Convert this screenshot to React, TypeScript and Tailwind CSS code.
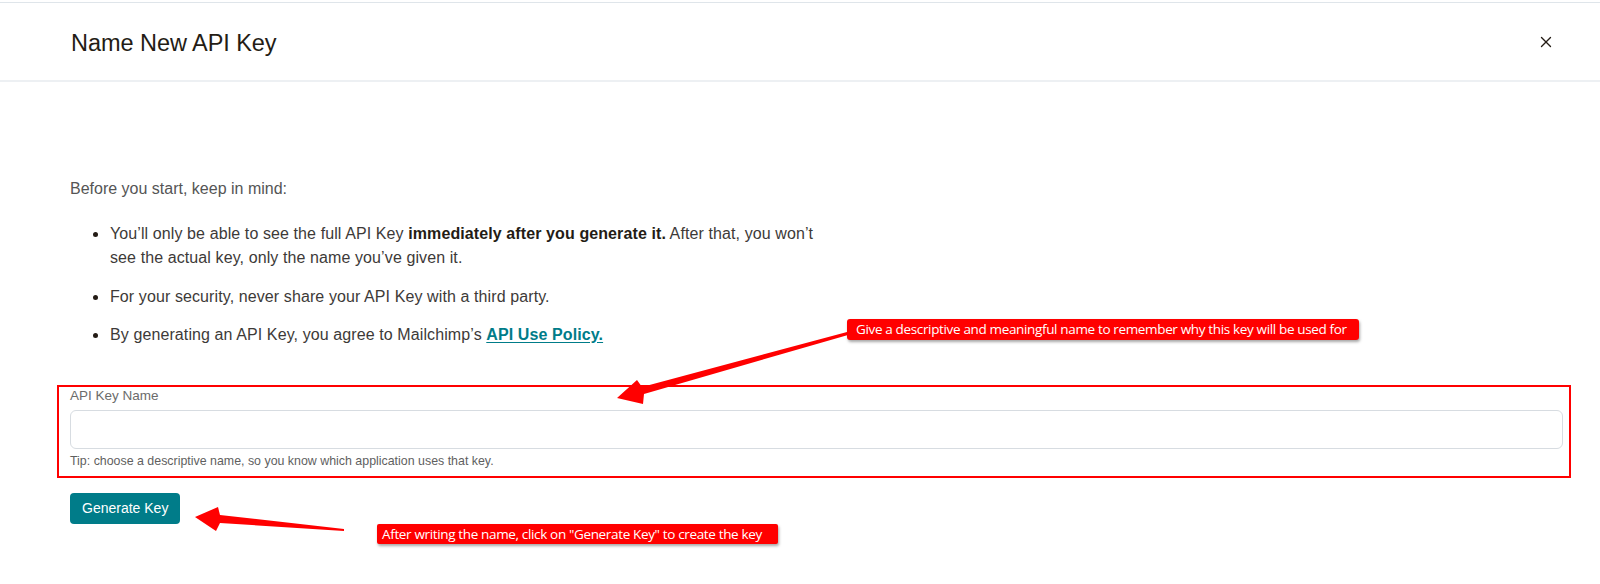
import React from "react";
import { X } from "lucide-react";

export default function App() {
  return (
    <div className="relative w-[1600px] h-[584px] overflow-hidden bg-white font-['Liberation_Sans',Arial,sans-serif]">
      <div className="pt-[2px]">
        <header className="flex h-[80px] items-center justify-between border-t border-b-2 border-t-[#dfe5ea] border-b-[#edf0f3] pl-[71px] pr-[45px]">
          <h1 className="pt-[2px] text-[23.5px] leading-8 font-normal tracking-[-0.05px] text-[#241c15]">Name New API Key</h1>
          <button className="text-[#241c15]">
            <X size={18} strokeWidth={1.8} />
          </button>
        </header>

        <main className="pl-[70px] pr-[37px]">
          <p className="mt-[95px] text-[16px] leading-6 text-[#555555]">Before you start, keep in mind:</p>
          <ul className="mt-[21px] text-[16px] leading-6 tracking-[0.1px] text-[#3d3a38]">
            <li className="flex">
              <span className="ml-[23px] mr-[12px] mt-[10px] h-[5px] w-[5px] shrink-0 rounded-full bg-[#241c15]" />
              <span>
                You’ll only be able to see the full API Key <strong className="font-semibold text-[#241c15]">immediately after you generate it.</strong> After that, you won’t
                <br />
                see the actual key, only the name you’ve given it.
              </span>
            </li>
            <li className="mt-[15px] flex">
              <span className="ml-[23px] mr-[12px] mt-[10px] h-[5px] w-[5px] shrink-0 rounded-full bg-[#241c15]" />
              <span>For your security, never share your API Key with a third party.</span>
            </li>
            <li className="mt-[14px] flex">
              <span className="ml-[23px] mr-[12px] mt-[10px] h-[5px] w-[5px] shrink-0 rounded-full bg-[#241c15]" />
              <span>
                By generating an API Key, you agree to Mailchimp’s{" "}
                <a className="font-semibold text-[#007c89] underline underline-offset-2">API Use Policy.</a>
              </span>
            </li>
          </ul>

          <div className="mt-[38px] -ml-[13px] -mr-[8px] border-2 border-[#ff0000] pl-[11px] pr-[6px] pt-[1px] pb-[8px]">
            <label className="block text-[13.5px] leading-4 text-[#6b6b6b]">API Key Name</label>
            <input className="mt-[6px] block h-[39px] w-full rounded-[6px] border border-[#d7dce1] bg-white" />
            <p className="mt-[5px] text-[12.4px] leading-[14px] text-[#5f5f5f]">
              Tip: choose a descriptive name, so you know which application uses that key.
            </p>
          </div>

          <button className="mt-[15px] h-[31px] rounded-[4px] bg-[#007c89] px-[12px] text-[14px] text-white">Generate Key</button>
        </main>
      </div>

      <svg className="pointer-events-none absolute left-0 top-0" width="1600" height="584" viewBox="0 0 1600 584">
        <polygon
          fill="#ff0000"
          points="847,332 642,387 637,380 617,398 643,404 644,394 848,335"
        />
        <polygon
          fill="#ff0000"
          points="344,529 220,515 218,507 195,517 216,531 220,523 344,531"
        />
      </svg>

      <div className="absolute left-[847px] top-[319px] flex h-[21px] w-[512px] items-center rounded-[3px] bg-[#ff0000] pl-[9px] font-['Open_Sans',sans-serif] text-[13.5px] font-medium tracking-[-0.35px] text-white shadow-[1px_2px_3px_rgba(0,0,0,0.35)] whitespace-nowrap">
        Give a descriptive and meaningful name to remember why this key will be used for
      </div>
      <div className="absolute left-[377px] top-[524px] flex h-[20px] w-[401px] items-center rounded-[2px] bg-[#ff0000] pl-[5px] font-['Open_Sans',sans-serif] text-[13.5px] font-medium tracking-[-0.35px] text-white shadow-[1px_2px_3px_rgba(0,0,0,0.35)] whitespace-nowrap">
        After writing the name, click on "Generate Key" to create the key
      </div>
    </div>
  );
}
